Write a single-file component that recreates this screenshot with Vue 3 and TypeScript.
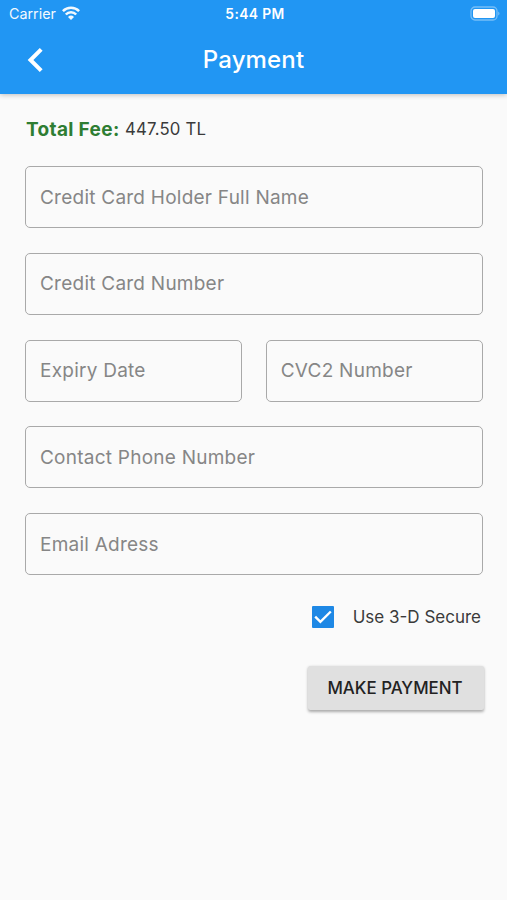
<script setup lang="ts">
import { ref } from 'vue'

interface Field {
  id: string
  label: string
  half?: boolean
}

const fields: Field[] = [
  { id: 'holder', label: 'Credit Card Holder Full Name' },
  { id: 'card', label: 'Credit Card Number' },
  { id: 'expiry', label: 'Expiry Date', half: true },
  { id: 'cvc', label: 'CVC2 Number', half: true },
  { id: 'phone', label: 'Contact Phone Number' },
  { id: 'email', label: 'Email Adress' },
]

const values = ref<Record<string, string>>({})
const secure = ref(true)
</script>

<template>
  <div class="screen">
    <header class="top">
      <div class="status">
        <div class="carrier">
          <span>Carrier</span>
          <svg class="wifi" width="18" height="14" viewBox="0 0 18 14" fill="none" stroke="#fff" stroke-width="2.5">
            <path d="M.9 5.2C5.4.7 12.6.7 17.1 5.2" />
            <path d="M3.8 8.5C6.6 5.6 11.4 5.6 14.2 8.5" />
            <path d="M6 10.9Q9 8.2 12 10.9L9 13.9Z" fill="#fff" stroke="none" />
          </svg>
        </div>
        <div class="clock">5:44 PM</div>
        <svg class="battery" width="31" height="15" viewBox="0 0 31 15">
          <rect x="1" y="1" width="26" height="13" rx="4" fill="none" stroke="#fff" stroke-opacity=".38" stroke-width="1.3" />
          <rect x="3" y="3" width="22" height="9" rx="2" fill="#fff" />
          <path d="M28.3 5.4Q30.6 7.5 28.3 9.6Z" fill="#fff" fill-opacity=".45" />
        </svg>
      </div>
      <div class="bar">
        <button class="back" aria-label="Back">
          <svg width="18" height="26" viewBox="0 0 18 26" fill="none" stroke="#fff" stroke-width="4">
            <path d="M15.2 2.3L4.5 13L15.2 23.7" />
          </svg>
        </button>
        <h1>Payment</h1>
      </div>
    </header>

    <main>
      <p class="fee"><strong>Total Fee:</strong><span>447.50 TL</span></p>
      <form class="form" @submit.prevent>
        <input
          v-for="f in fields"
          :key="f.id"
          v-model="values[f.id]"
          class="field"
          :class="{ half: f.half }"
          :placeholder="f.label"
          type="text"
        />
      </form>
      <div class="secure" @click="secure = !secure">
        <span class="box" :class="{ on: secure }">
          <svg v-if="secure" width="22" height="22" viewBox="0 0 22 22" fill="none" stroke="#fff" stroke-width="2.4">
            <path d="M3.2 10.7L8.4 15.9L18.8 5.5" />
          </svg>
        </span>
        <span class="secure-label">Use 3-D Secure</span>
      </div>
      <button class="pay">MAKE PAYMENT</button>
    </main>
  </div>
</template>

<style>
body {
  background: #fafafa;
}
</style>

<style scoped>
.screen {
  min-height: 900px;
  background: #fafafa;
  font-family: Inter, 'Liberation Sans', sans-serif;
  color: #3a3a3a;
}
.top {
  height: 94px;
  background: #2196f3;
  color: #fff;
  box-shadow: 0 1px 5px rgba(0, 0, 0, 0.24);
}
.status {
  display: grid;
  grid-template-columns: 1fr auto 1fr;
  align-items: center;
  height: 27px;
  padding: 0 6px 0 9px;
}
.carrier {
  display: flex;
  align-items: center;
  gap: 6px;
  font-size: 14.3px;
  opacity: 0.95;
}
.wifi {
  margin-top: -1px;
}
.clock {
  font-size: 13.8px;
  font-weight: 600;
  letter-spacing: 0.4px;
}
.battery {
  justify-self: end;
}
.bar {
  display: grid;
  grid-template-columns: 76px 1fr 76px;
  align-items: center;
  height: 65px;
}
.back {
  display: flex;
  justify-content: center;
  padding: 0 6px 0 0;
  border: 0;
  background: none;
}
h1 {
  margin: 0;
  text-align: center;
  font-size: 24px;
  font-weight: 500;
  letter-spacing: 0.15px;
}
main {
  display: flex;
  flex-direction: column;
  padding: 23px 24.5px 0 25px;
}
.fee {
  display: flex;
  align-items: center;
  gap: 5.5px;
  height: 24px;
  margin: 0 0 25px;
  padding-left: 1px;
  font-size: 16.8px;
  letter-spacing: 0.17px;
}
.fee strong {
  font-size: 19px;
  font-weight: 700;
  letter-spacing: 0.34px;
  color: #2e7d32;
}
.form {
  display: grid;
  grid-template-columns: 1fr 1fr;
  gap: 24.75px 24px;
}
.field {
  box-sizing: border-box;
  grid-column: span 2;
  width: 100%;
  min-width: 0;
  height: 62px;
  padding: 0 14px;
  border: 1.4px solid #a9a9a9;
  border-radius: 5px;
  outline: 0;
  background: transparent;
  font-family: inherit;
  font-size: 19px;
  letter-spacing: 0.24px;
  color: #3a3a3a;
}
.field::placeholder {
  color: #868686;
  opacity: 1;
}
.field.half {
  grid-column: span 1;
}
.secure {
  display: flex;
  align-items: center;
  align-self: flex-end;
  gap: 18.5px;
  height: 24px;
  margin-top: 29.5px;
  padding-right: 1.5px;
}
.box {
  box-sizing: border-box;
  width: 22px;
  height: 22px;
  border: 2px solid #757575;
  border-radius: 1px;
}
.box.on {
  border: 0;
  background: #1e88e5;
}
.box svg {
  display: block;
}
.secure-label {
  font-size: 17px;
}
.pay {
  align-self: flex-end;
  width: 176px;
  height: 44px;
  margin-top: 37px;
  margin-right: -1.5px;
  padding: 0 2px 0 0;
  border: 0;
  border-radius: 2.5px;
  background: #e0e0e0;
  box-shadow: 0 1.5px 3px rgba(0, 0, 0, 0.32);
  font-family: inherit;
  font-size: 16.9px;
  font-weight: 500;
  color: #222;
}
</style>
